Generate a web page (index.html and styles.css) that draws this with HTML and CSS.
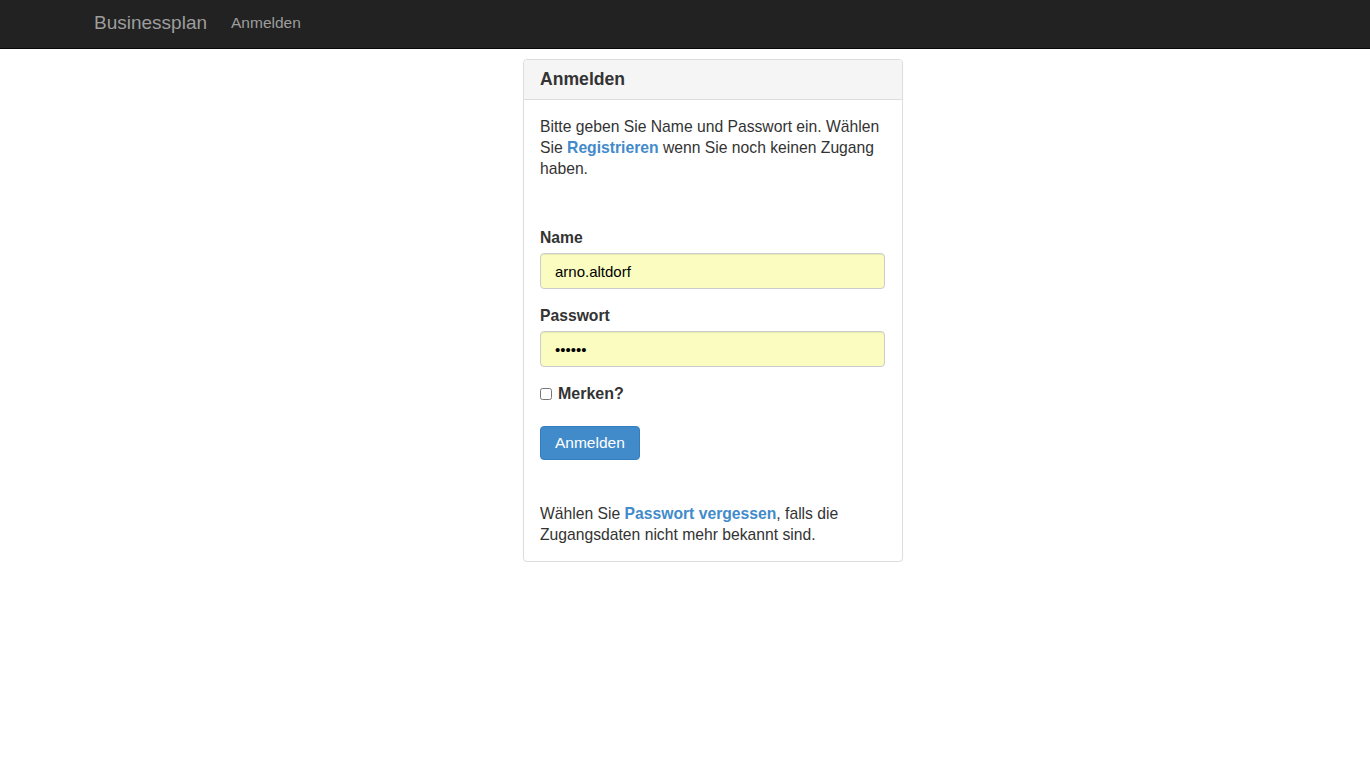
FILE: index.html
```html
<!DOCTYPE html>
<html>
<head>
    <title>Businessplan - Anmelden</title>
    <link rel="stylesheet" href="styles.css">
</head>
<body>
    <div class="navbar">
        <a href="#" class="brand">Businessplan</a>
        <a href="#" class="nav-link">Anmelden</a>
    </div>

    <div class="main">
        <div class="panel">
            <div class="panel-heading">Anmelden</div>
            <div class="panel-body">
                <p class="intro">Bitte geben Sie Name und Passwort ein. Wählen Sie <a href="#" class="link">Registrieren</a> wenn Sie noch keinen Zugang haben.</p>

                <form class="login-form">
                    <div class="form-group">
                        <label class="field-label" for="name">Name</label>
                        <input type="text" id="name" class="form-control" value="arno.altdorf">
                    </div>
                    <div class="form-group">
                        <label class="field-label" for="pass">Passwort</label>
                        <input type="password" id="pass" class="form-control" value="geheim">
                    </div>
                    <div class="checkbox">
                        <input type="checkbox" id="remember">
                        <label for="remember">Merken?</label>
                    </div>
                    <button type="button" class="btn-primary">Anmelden</button>
                </form>

                <p class="footer-text">Wählen Sie <a href="#" class="link">Passwort vergessen</a>, falls die Zugangsdaten nicht mehr bekannt sind.</p>
            </div>
        </div>
    </div>
</body>
</html>
```

FILE: styles.css
```css
* {
    margin: 0;
    padding: 0;
    box-sizing: border-box;
}

body {
    font-family: "Liberation Sans", Arial, sans-serif;
    font-size: 15.7px;
    line-height: 21px;
    color: #333333;
    background-color: #ffffff;
}

.navbar {
    height: 49px;
    background-color: #222222;
    border-bottom: 1px solid #080808;
    display: flex;
    align-items: center;
    padding-left: 94px;
}

.brand {
    font-size: 19px;
    color: #9d9d9d;
    text-decoration: none;
    margin-right: 24px;
    margin-top: -4px;
}

.nav-link {
    font-size: 15.5px;
    color: #9d9d9d;
    text-decoration: none;
    margin-top: -4px;
}

.main {
    padding-top: 10px;
    padding-left: 523px;
}

.panel {
    width: 380px;
    border: 1px solid #dddddd;
    border-radius: 4px;
    box-shadow: 0 1px 1px rgba(0, 0, 0, 0.05);
}

.panel-heading {
    height: 40px;
    padding: 0 16px;
    display: flex;
    align-items: center;
    font-size: 17.6px;
    font-weight: bold;
    background-color: #f5f5f5;
    border-bottom: 1px solid #dddddd;
    border-radius: 3px 3px 0 0;
}

.panel-body {
    padding: 16px 17px 16px 16px;
}

.link {
    color: #428bca;
    font-weight: bold;
    text-decoration: none;
}

.intro {
    margin-bottom: 48px;
}

.form-group {
    margin-bottom: 16px;
}

.field-label {
    display: block;
    font-weight: bold;
    line-height: 21px;
    margin-bottom: 5px;
}

.form-control {
    display: block;
    width: 100%;
    height: 36px;
    padding: 0 14px;
    font-family: "Liberation Sans", Arial, sans-serif;
    font-size: 15px;
    color: #000000;
    background-color: #fafdbf;
    border: 1px solid #cccccc;
    border-radius: 4px;
    box-shadow: inset 0 1px 1px rgba(0, 0, 0, 0.075);
}

.checkbox {
    display: flex;
    align-items: center;
    gap: 6px;
    margin-top: 11px;
    margin-bottom: 22px;
}

.checkbox input {
    width: 12px;
    height: 12px;
    margin: 0;
}

.checkbox label {
    font-size: 16px;
    font-weight: bold;
}

.btn-primary {
    display: block;
    height: 34px;
    padding: 0 14px;
    font-family: "Liberation Sans", Arial, sans-serif;
    font-size: 15.5px;
    color: #ffffff;
    background-color: #428bca;
    border: 1px solid #357ebd;
    border-radius: 4px;
    cursor: pointer;
}

.footer-text {
    margin-top: 43px;
}
```
